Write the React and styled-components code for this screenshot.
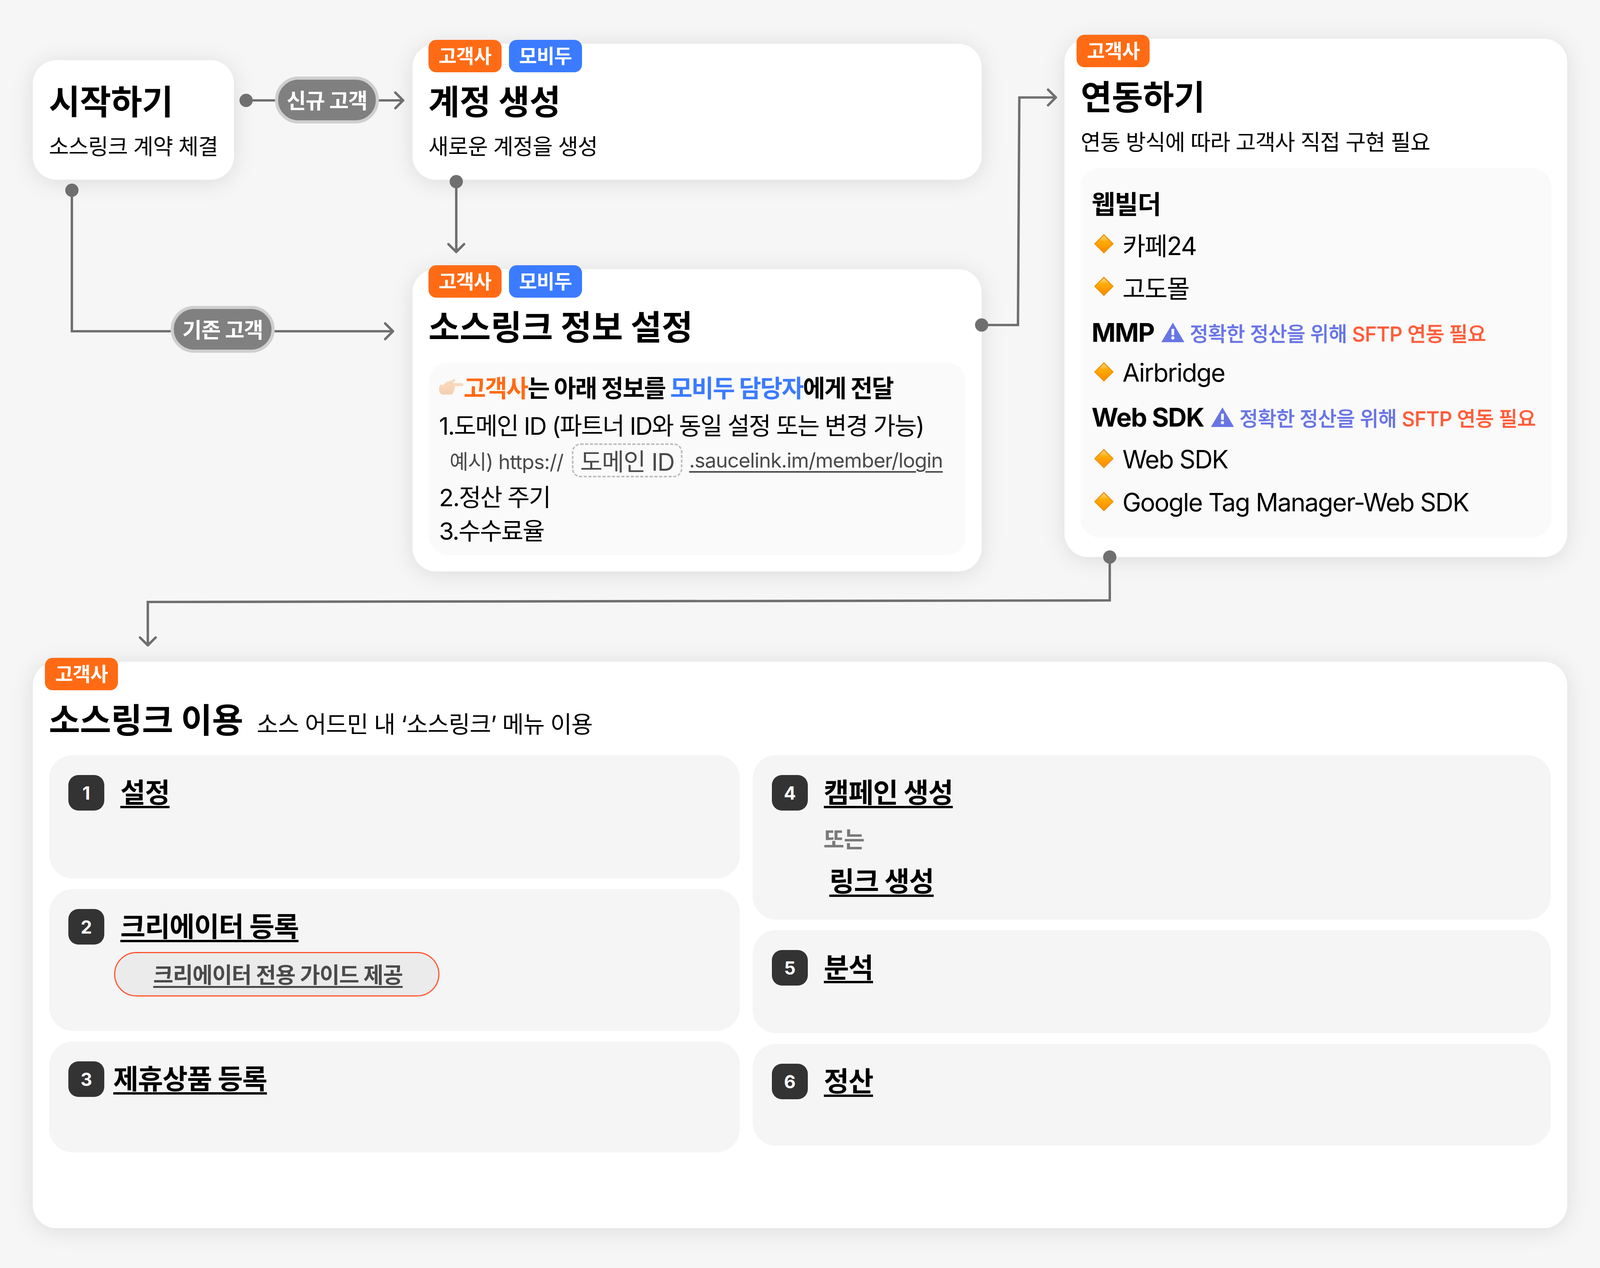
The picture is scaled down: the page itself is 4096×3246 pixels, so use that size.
import React from 'react';
import styled, { createGlobalStyle } from 'styled-components';

const Global = createGlobalStyle`
html, body {
  margin: 0;
  padding: 0;
  background: #f6f6f6;
}
* { box-sizing: border-box; }
`

const Page = styled.div`
position: relative;
width: 4096px;
height: 3246px;
padding: 0 84px;
background: #f6f6f6;
color: #000;
font-family: Inter, "Noto Sans CJK KR", sans-serif;
overflow: hidden;
`
const Top = styled.div`
display: flex;
height: 1694px;
`
const StartCol = styled.div`
width: 515px;
padding-top: 154px;
`
const MidCol = styled.div`
display: flex;
flex-direction: column;
gap: 229px;
width: 1458px;
margin-left: 457px;
padding-top: 112px;
`
const RightCol = styled.div`
width: 1287px;
margin-left: 212px;
padding-top: 99px;
`
const Card = styled.section`
position: relative;
height: ${p => p.$h}px;
padding: ${p => p.$pt}px 41px 0 41px;
background: #fff;
border-radius: ${p => p.$r || 60}px;
box-shadow: 0 6px 60px rgba(0, 0, 0, 0.11);
`
const Tags = styled.div`
position: absolute;
top: -10px;
left: ${p => p.$left || 41}px;
display: flex;
gap: 19px;
`
const Tag = styled.span`
display: flex;
align-items: center;
justify-content: center;
width: 187px;
height: 83px;
padding-bottom: 8px;
border-radius: 20px;
background: ${p => (p.$blue ? '#3b7bff' : '#ff6b14')};
color: #fff;
font-size: 50px;
font-weight: 700;
letter-spacing: -1px;
`
const Title = styled.h2`
margin: 0;
font-size: 87px;
line-height: 100px;
font-weight: 700;
letter-spacing: -0.5px;
`
const Sub = styled.p`
margin: ${p => p.$mt || 23}px 0 0;
font-size: 56px;
line-height: 80px;
font-weight: 400;
letter-spacing: -1.1px;
white-space: nowrap;
`
const InfoBox = styled.div`
height: 493px;
margin: 39px 0 0 1px;
padding: 22px 26px 0;
background: #fafafa;
border-radius: 48px;
`
const InfoRow = styled.div`
display: flex;
align-items: center;
height: 80px;
margin-top: ${p => p.$mt || 0}px;
font-size: ${p => (p.$small ? 52 : 62)}px;
font-weight: ${p => (p.$strong ? 700 : 400)};
letter-spacing: ${p => (p.$small ? -1.1 : -2.4)}px;
color: ${p => (p.$small ? '#4a4a4a' : '#000')};
white-space: pre;
`
const Accent = styled.span`
color: ${p => p.$c};
`
const HandIcon = styled.svg`
width: 63px;
height: 42px;
flex: none;
`
const DomainBox = styled.span`
display: flex;
align-items: center;
justify-content: center;
width: 283px;
height: 87px;
margin: 0 17px 0 22px;
border: 4px dashed #bdbdbd;
border-radius: 22px;
font-size: 62px;
letter-spacing: -1.5px;
`
const Link = styled.span`
text-decoration: underline;
text-decoration-thickness: 4px;
text-underline-offset: 9px;
`
const MethodBox = styled.div`
height: 946px;
margin: 26px 0 0;
padding: 48px 28px 0;
background: #fafafa;
border-radius: 48px;
`
const MethodRow = styled.div`
display: flex;
align-items: center;
height: 80px;
margin-top: ${p => p.$mt || 0}px;
padding-left: ${p => (p.$item ? 7 : 0)}px;
font-size: ${p => (p.$item ? 64 : 66)}px;
font-weight: ${p => (p.$item ? 400 : 700)};
letter-spacing: ${p => (p.$item ? -2.1 : -1.8)}px;
white-space: pre;
`
const Diamond = styled.svg`
width: 50px;
height: 50px;
margin: -3px 22px 0 0;
flex: none;
`
const WarnIcon = styled.svg`
width: 59px;
height: 50px;
margin: 0 14px 0 18px;
flex: none;
`
const Warn = styled.span`
font-size: 52px;
font-weight: 500;
letter-spacing: -0.8px;
color: #6875e5;
-webkit-text-stroke: 0.5px currentColor;
`
const Bottom = styled(Card)`
padding-top: 101px;
`
const UseHead = styled.div`
display: flex;
align-items: baseline;
gap: 35px;
`
const UseSub = styled.span`
font-size: 60px;
font-weight: 400;
letter-spacing: -1.4px;
`
const Columns = styled.div`
display: grid;
grid-template-columns: 1768px 2043px;
gap: 33px;
margin: 38px 0 0 1px;
`
const Stack = styled.div`
display: flex;
flex-direction: column;
gap: ${p => p.$gap}px;
`
const Panel = styled.div`
height: ${p => p.$h}px;
padding: 51px 49px 0;
background: #f5f5f5;
border-radius: 60px;
`
const StepRow = styled.div`
display: flex;
align-items: center;
gap: ${p => p.$gap || 41}px;
height: 91px;
`
const StepNo = styled.span`
display: flex;
align-items: center;
justify-content: center;
width: 92px;
height: 91px;
flex: none;
border-radius: 26px;
background: #333;
color: #fff;
font-size: 46px;
font-weight: 700;
`
const StepName = styled.span`
display: block;
margin: ${p => p.$m || 0};
font-size: 70px;
line-height: 90px;
font-weight: 700;
letter-spacing: -1.4px;
text-decoration: underline;
text-decoration-thickness: 6px;
text-underline-offset: 8px;
`
const Or = styled.div`
margin: 34px 0 0 132px;
font-size: 58px;
line-height: 80px;
font-weight: 700;
letter-spacing: -1px;
color: #7a7a7a;
`
const GuideBtn = styled.div`
display: flex;
align-items: center;
justify-content: center;
width: 833px;
height: 114px;
margin: 19px 0 0 117px;
padding: 0 0 6px 6px;
border: 3px solid #ff5530;
border-radius: 57px;
background: #ebebeb;
color: #4a4a4a;
font-size: 56px;
font-weight: 700;
letter-spacing: -1.3px;
text-decoration: underline;
text-decoration-thickness: 5px;
text-underline-offset: 8px;
`
const Wires = styled.svg`
position: absolute;
top: 0;
left: 0;
width: 4096px;
height: 3246px;
pointer-events: none;
`
const Pill = styled.div`
position: absolute;
left: ${p => p.$x}px;
top: ${p => p.$y}px;
display: flex;
align-items: center;
justify-content: center;
width: 266px;
height: 120px;
padding-bottom: 4px;
border: 8px solid #cfcfcf;
border-radius: 60px;
background: #808080;
color: #fff;
font-size: 54px;
font-weight: 700;
letter-spacing: -1px;
`

const Hand = () => (
  <HandIcon viewBox="0 0 354 232">
    <defs>
      <linearGradient id="skin" x1="0" y1="0" x2="0" y2="1">
        <stop offset="0" stopColor="#fbdcc0" />
        <stop offset="1" stopColor="#f4cfae" />
      </linearGradient>
    </defs>
    <path
      d="M20 85 L66 92 C80 62 95 48 125 40 C165 30 190 22 208 6 C222 -4 236 8 232 26 C228 44 210 58 190 64 L330 64 C358 64 358 106 330 106 L222 108 C232 120 228 135 220 142 C222 155 218 170 210 180 C208 205 195 228 170 228 L60 230 C20 225 0 200 0 150 C0 125 8 100 20 85Z"
      fill="url(#skin)"
    />
    <path d="M150 66 C170 62 180 64 190 64" fill="none" stroke="#ebbf9c" strokeWidth="4" />
  </HandIcon>
);

const Gem = () => (
  <Diamond viewBox="0 0 100 100">
    <defs>
      <linearGradient id="gem" x1="0" y1="0" x2="0" y2="1">
        <stop offset="0" stopColor="#ffdc8a" />
        <stop offset="0.35" stopColor="#ffab05" />
        <stop offset="1" stopColor="#ff8a00" />
      </linearGradient>
    </defs>
    <polygon points="50,0 100,50 50,100 0,50" fill="#ee8f05" />
    <polygon points="50,8 93,50 50,94 7,50" fill="url(#gem)" />
  </Diamond>
);

const Warning = () => (
  <WarnIcon viewBox="0 0 59 50">
    <polygon points="29.5,0 59,50 0,50" fill="#6875e5" />
    <rect x="26" y="16" width="7" height="16" fill="#fafafa" />
    <circle cx="29.5" cy="39" r="4.2" fill="#fafafa" />
  </WarnIcon>
);

const SftpNote = () => (
  <Warn>정확한 정산을 위해 <Accent $c="#ff5c3a">SFTP 연동 필요</Accent></Warn>
);

const wire = { fill: 'none', stroke: '#6f6f6f', strokeWidth: 6.2 };
const head = { ...wire, strokeLinecap: 'round', strokeLinejoin: 'round' };

const Connectors = () => (
  <Wires viewBox="0 0 4096 3246">
    <circle cx="630" cy="257" r="17" fill="#6f6f6f" />
    <path d="M630 257 H704 M969 257 H1032" {...wire} />
    <path d="M1012 237 L1032 257 L1012 277" {...head} />

    <circle cx="184" cy="487" r="17" fill="#6f6f6f" />
    <path d="M184 487 V848 H437 M703 848 H1006" {...wire} />
    <path d="M986 828 L1006 848 L986 868" {...head} />

    <circle cx="1168" cy="465" r="17" fill="#6f6f6f" />
    <path d="M1168 465 V645" {...wire} />
    <path d="M1148 625 L1168 645 L1188 625" {...head} />

    <circle cx="2513" cy="832" r="17" fill="#6f6f6f" />
    <path d="M2513 832 H2606 L2609.5 249.5 H2703" {...wire} />
    <path d="M2683 229.5 L2703 249.5 L2683 269.5" {...head} />

    <circle cx="2841" cy="1426" r="17" fill="#6f6f6f" />
    <path d="M2841 1426 V1537 L378.4 1541 V1652" {...wire} />
    <path d="M358.4 1632 L378.4 1652 L398.4 1632" {...head} />
  </Wires>
);

export default function App() {
  return (
    <Page>
      <Global />
      <Top>
        <StartCol>
          <Card $h={306} $pt={58}>
            <Title>시작하기</Title>
            <Sub>소스링크 계약 체결</Sub>
          </Card>
        </StartCol>
        <MidCol>
          <Card $h={348} $pt={100}>
            <Tags>
              <Tag>고객사</Tag>
              <Tag $blue>모비두</Tag>
            </Tags>
            <Title>계정 생성</Title>
            <Sub>새로운 계정을 생성</Sub>
          </Card>
          <Card $h={774} $pt={100}>
            <Tags>
              <Tag>고객사</Tag>
              <Tag $blue>모비두</Tag>
            </Tags>
            <Title>소스링크 정보 설정</Title>
            <InfoBox>
              <InfoRow $strong>
                <Hand />
                <Accent $c="#ff6b14">고객사</Accent>는 아래 정보를 <Accent $c="#3b7bff">모비두 담당자</Accent>에게 전달
              </InfoRow>
              <InfoRow $mt={16}>1.도메인 ID (파트너 ID와 동일 설정 또는 변경 가능)</InfoRow>
              <InfoRow $mt={12} $small>
                {'  예시) https://'}
                <DomainBox>도메인 ID</DomainBox>
                <Link>.saucelink.im/member/login</Link>
              </InfoRow>
              <InfoRow $mt={11}>2.정산 주기</InfoRow>
              <InfoRow $mt={6}>3.수수료율</InfoRow>
            </InfoBox>
          </Card>
        </MidCol>
        <RightCol>
          <Card $h={1327} $pt={101}>
            <Tags $left={31}>
              <Tag>고객사</Tag>
            </Tags>
            <Title>연동하기</Title>
            <Sub $mt={24}>연동 방식에 따라 고객사 직접 구현 필요</Sub>
            <MethodBox>
              <MethodRow>웹빌더</MethodRow>
              <MethodRow $item $mt={27}><Gem />카페24</MethodRow>
              <MethodRow $item $mt={29}><Gem />고도몰</MethodRow>
              <MethodRow $mt={37}>MMP<Warning /><SftpNote /></MethodRow>
              <MethodRow $item $mt={22}><Gem />Airbridge</MethodRow>
              <MethodRow $mt={35}>Web SDK<Warning /><SftpNote /></MethodRow>
              <MethodRow $item $mt={27}><Gem />Web SDK</MethodRow>
              <MethodRow $item $mt={30}><Gem />Google Tag Manager-Web SDK</MethodRow>
            </MethodBox>
          </Card>
        </RightCol>
      </Top>
      <Bottom as="section" $h={1450} $pt={101}>
        <Tags $left={31}>
          <Tag>고객사</Tag>
        </Tags>
        <UseHead>
          <Title>소스링크 이용</Title>
          <UseSub>소스 어드민 내 ‘소스링크’ 메뉴 이용</UseSub>
        </UseHead>
        <Columns>
          <Stack $gap={27}>
            <Panel $h={316}>
              <StepRow>
                <StepNo>1</StepNo>
                <StepName>설정</StepName>
              </StepRow>
            </Panel>
            <Panel $h={363}>
              <StepRow>
                <StepNo>2</StepNo>
                <StepName>크리에이터 등록</StepName>
              </StepRow>
              <GuideBtn>크리에이터 전용 가이드 제공</GuideBtn>
            </Panel>
            <Panel $h={284}>
              <StepRow $gap={23}>
                <StepNo>3</StepNo>
                <StepName>제휴상품 등록</StepName>
              </StepRow>
            </Panel>
          </Stack>
          <Stack $gap={27}>
            <Panel $h={421}>
              <StepRow>
                <StepNo>4</StepNo>
                <StepName>캠페인 생성</StepName>
              </StepRow>
              <Or>또는</Or>
              <StepName $m="23px 0 0 147px">링크 생성</StepName>
            </Panel>
            <Panel $h={264}>
              <StepRow>
                <StepNo>5</StepNo>
                <StepName>분석</StepName>
              </StepRow>
            </Panel>
            <Panel $h={261}>
              <StepRow>
                <StepNo>6</StepNo>
                <StepName>정산</StepName>
              </StepRow>
            </Panel>
          </Stack>
        </Columns>
      </Bottom>
      <Connectors />
      <Pill $x={704} $y={196}>신규 고객</Pill>
      <Pill $x={437} $y={783}>기존 고객</Pill>
    </Page>
  );
}
